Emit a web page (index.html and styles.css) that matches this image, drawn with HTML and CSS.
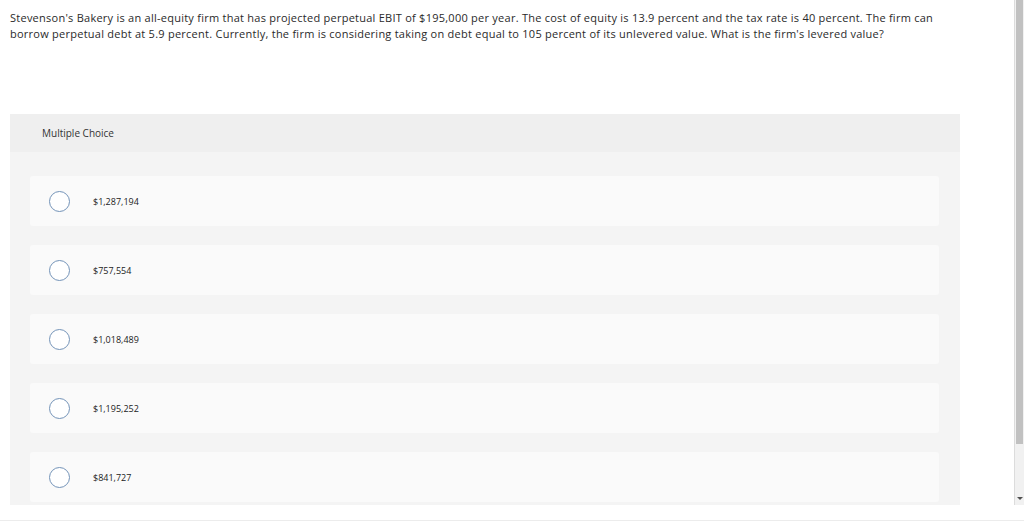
FILE: index.html
```html
<!DOCTYPE html>
<html>
<head>
<meta charset="utf-8">
<link rel="stylesheet" href="styles.css">
</head>
<body>
<div class="frame">
  <main class="content">
    <p class="question">Stevenson's Bakery is an all-equity firm that has projected perpetual EBIT of $195,000 per year. The cost of equity is 13.9 percent and the tax rate is 40 percent. The firm can borrow perpetual debt at 5.9 percent. Currently, the firm is considering taking on debt equal to 105 percent of its unlevered value. What is the firm's levered value?</p>
    <section class="panel">
      <header class="panel-head">Multiple Choice</header>
      <div class="options">
        <label class="option"><span class="radio"></span><span class="opt-text">$1,287,194</span></label>
        <label class="option"><span class="radio"></span><span class="opt-text">$757,554</span></label>
        <label class="option"><span class="radio"></span><span class="opt-text">$1,018,489</span></label>
        <label class="option"><span class="radio"></span><span class="opt-text">$1,195,252</span></label>
        <label class="option"><span class="radio"></span><span class="opt-text">$841,727</span></label>
      </div>
    </section>
  </main>
  <div class="scrollbar">
    <div class="thumb"></div>
    <div class="arrow"></div>
  </div>
</div>
<div class="footer"></div>
</body>
</html>
```

FILE: styles.css
```css
html, body {
  margin: 0;
  padding: 0;
  background: #ffffff;
}
body {
  font-family: "Open Sans", Lato, sans-serif;
  color: #2b2b2b;
  width: 1024px;
  height: 525px;
  overflow: hidden;
}
.frame {
  display: flex;
  height: 505px;
}
.content {
  width: 1014px;
  height: 505px;
  overflow: hidden;
  padding: 10px 0 0 10px;
  box-sizing: border-box;
}
.question {
  margin: 0;
  width: 940px;
  font-size: 11px;
  letter-spacing: 0.25px;
  line-height: 16px;
  color: #2a2a2a;
}
.panel {
  margin-top: 72px;
  width: 950px;
  background: #f4f4f4;
}
.panel-head {
  height: 38px;
  background: #efefef;
  display: flex;
  align-items: center;
  padding-left: 32px;
  font-size: 10px;
  color: #333;
}
.options {
  display: flex;
  flex-direction: column;
  gap: 19px;
  padding: 24px 21px 20px 20px;
}
.option {
  height: 50px;
  background: #fafafa;
  border-radius: 3px;
  display: flex;
  align-items: center;
  padding-left: 19px;
}
.radio {
  width: 19px;
  height: 19px;
  border: 1px solid #7393b8;
  border-radius: 50%;
  background: #fff;
  flex: none;
}
.opt-text {
  margin-left: 23px;
  font-size: 9px;
  color: #222;
}
.scrollbar {
  width: 10px;
  height: 505px;
  background: #f1f1f1;
  border-left: 1px solid #dcdcdc;
  box-sizing: border-box;
  position: relative;
}
.thumb {
  margin-left: 1px;
  width: 7px;
  height: 444px;
  background: #c1c1c1;
}
.arrow {
  position: absolute;
  left: 2px;
  top: 497px;
  width: 0;
  height: 0;
  border-left: 3px solid transparent;
  border-right: 3px solid transparent;
  border-top: 3px solid #505050;
}
.footer {
  height: 15px;
  border-bottom: 1px solid #ececec;
}
```
